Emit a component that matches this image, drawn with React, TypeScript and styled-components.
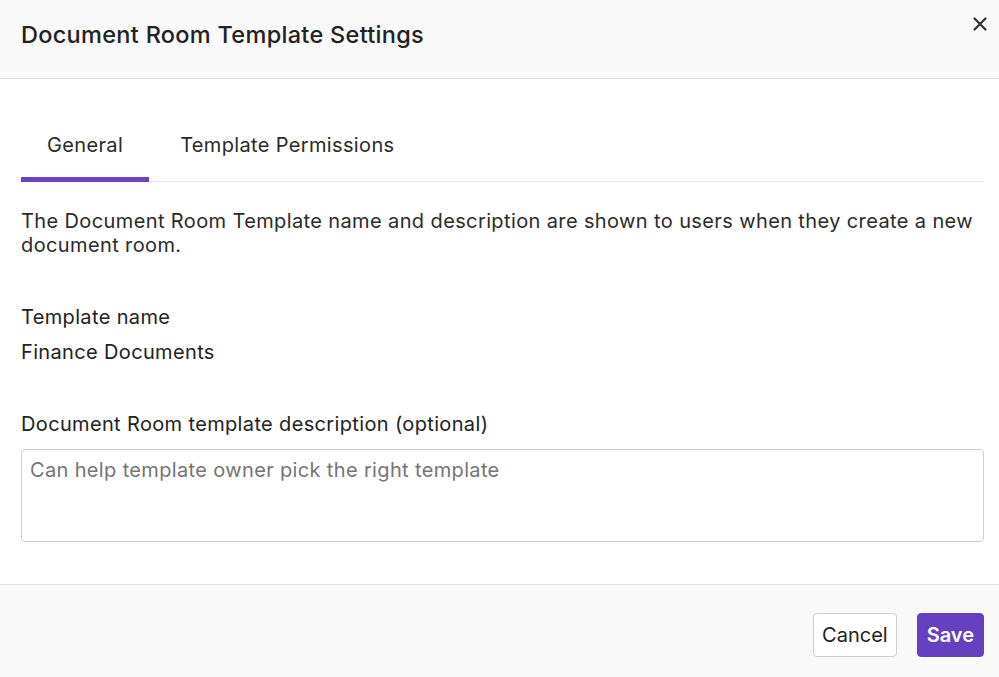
import React, { ChangeEvent, useState } from 'react';
import styled, { createGlobalStyle } from 'styled-components';

const GlobalStyle = createGlobalStyle`
  html, body {
    margin: 0;
    padding: 0;
    background: #ffffff;
  }
  body {
    font-family: Inter, "Noto Sans", "Liberation Sans", sans-serif;
    color: #1f1f1f;
  }
`;

const Dialog = styled.div`
  width: 999px;
  height: 677px;
  display: flex;
  flex-direction: column;
  background: #ffffff;
`;

const Header = styled.div`
  height: 78px;
  flex: none;
  display: flex;
  align-items: center;
  justify-content: space-between;
  padding: 0 9px 0 21px;
  background: #f9f9f9;
  border-bottom: 1px solid #e4e4e4;
`;

const Title = styled.h1`
  margin: 0;
  font-size: 23.5px;
  font-weight: 500;
  letter-spacing: 0.3px;
  color: #222222;
  padding-bottom: 10px;
`;

const CloseButton = styled.button`
  border: none;
  background: none;
  padding: 0;
  width: 20px;
  height: 20px;
  align-self: flex-start;
  margin-top: 14px;
  display: flex;
  align-items: center;
  justify-content: center;
  cursor: pointer;
  color: #333333;
`;

const Body = styled.div`
  flex: 1;
  padding: 43px 15px 0 21px;
  display: flex;
  flex-direction: column;
`;

const Tabs = styled.div`
  display: flex;
  gap: 5px;
  border-bottom: 1px solid #e6e6e6;
`;

const Tab = styled.button<{ $active?: boolean }>`
  border: none;
  background: none;
  font-family: inherit;
  font-size: 20px;
  letter-spacing: 0.35px;
  color: #2a2a2a;
  height: 60px;
  padding: 0 26px 10px;
  margin-bottom: -1px;
  cursor: pointer;
  border-bottom: 5px solid ${p => (p.$active ? '#6a43c4' : 'transparent')};
  box-sizing: border-box;
`;

const Intro = styled.p`
  margin: 27px 0 0;
  font-size: 20px;
  letter-spacing: 0.38px;
  line-height: 24px;
  color: #2b2b2b;
`;

const Field = styled.div<{ $gap?: number }>`
  margin-top: ${p => p.$gap ?? 0}px;
  display: flex;
  flex-direction: column;
`;

const Label = styled.label`
  font-size: 20px;
  letter-spacing: 0.35px;
  line-height: 25px;
  color: #222222;
`;

const Value = styled.div`
  font-size: 20px;
  letter-spacing: 0.35px;
  line-height: 25px;
  margin-top: 10px;
  color: #222222;
`;

const TextArea = styled.textarea`
  margin-top: 12px;
  height: 93px;
  box-sizing: border-box;
  border: 1px solid #cfcfcf;
  border-radius: 4px;
  padding: 8px 8px;
  font-family: inherit;
  font-size: 20px;
  letter-spacing: 0.35px;
  line-height: 25px;
  color: #222222;
  resize: none;
  outline: none;

  ::placeholder {
    color: #8a8a8a;
  }
`;

const Footer = styled.div`
  height: 93px;
  flex: none;
  box-sizing: border-box;
  background: #f9f9f9;
  border-top: 1px solid #e4e4e4;
  display: flex;
  align-items: center;
  justify-content: flex-end;
  gap: 20px;
  padding: 8px 15px 0 21px;
`;

const Button = styled.button<{ $primary?: boolean }>`
  height: 44px;
  padding: 0 ${p => (p.$primary ? 9 : 8)}px;
  border-radius: 4px;
  font-family: inherit;
  font-size: 20px;
  font-weight: ${p => (p.$primary ? 600 : 400)};
  cursor: pointer;
  border: 1px solid ${p => (p.$primary ? '#6541c1' : '#cfcfcf')};
  background: ${p => (p.$primary ? '#6541c1' : '#ffffff')};
  color: ${p => (p.$primary ? '#ffffff' : '#222222')};
`;

const CloseIcon = () => (
  <svg width="14" height="14" viewBox="0 0 14 14" fill="none">
    <path d="M1.5 1.5l11 11M12.5 1.5l-11 11" stroke="currentColor" strokeWidth="2.2" strokeLinecap="round" />
  </svg>
);

const App = () => {
  const [tab, setTab] = useState('general');
  const [description, setDescription] = useState('');

  const onChangeDescription = (e: ChangeEvent<HTMLTextAreaElement>) => {
    setDescription(e.currentTarget.value);
  };

  return (
    <>
      <GlobalStyle />
      <Dialog>
        <Header>
          <Title>Document Room Template Settings</Title>
          <CloseButton aria-label="Close">
            <CloseIcon />
          </CloseButton>
        </Header>
        <Body>
          <Tabs>
            <Tab $active={tab === 'general'} onClick={() => setTab('general')}>General</Tab>
            <Tab $active={tab === 'permissions'} onClick={() => setTab('permissions')}>Template Permissions</Tab>
          </Tabs>
          <Intro>
            The Document Room Template name and description are shown to users when they create a new document room.
          </Intro>
          <Field $gap={48}>
            <Label>Template name</Label>
            <Value>Finance Documents</Value>
          </Field>
          <Field $gap={47}>
            <Label>Document Room template description (optional)</Label>
            <TextArea
              placeholder="Can help template owner pick the right template"
              value={description}
              onChange={onChangeDescription}
            />
          </Field>
        </Body>
        <Footer>
          <Button>Cancel</Button>
          <Button $primary>Save</Button>
        </Footer>
      </Dialog>
    </>
  );
};

export default App;
